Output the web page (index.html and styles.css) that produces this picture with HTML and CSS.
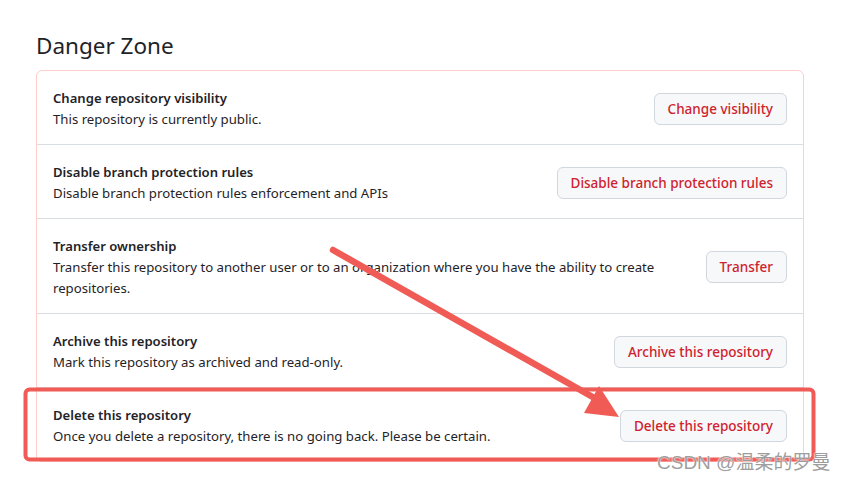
FILE: index.html
```html
<!DOCTYPE html>
<html lang="en">
<head>
<meta charset="utf-8">
<title>Danger Zone</title>
<link rel="stylesheet" href="styles.css">
</head>
<body>
<main class="page">
  <h2 class="heading">Danger Zone</h2>
  <section class="danger-box">
    <div class="row">
      <div class="info">
        <div class="title">Change repository visibility</div>
        <div class="desc">This repository is currently public.</div>
      </div>
      <button class="btn">Change visibility</button>
    </div>
    <div class="row">
      <div class="info">
        <div class="title">Disable branch protection rules</div>
        <div class="desc">Disable branch protection rules enforcement and APIs</div>
      </div>
      <button class="btn">Disable branch protection rules</button>
    </div>
    <div class="row">
      <div class="info narrow">
        <div class="title">Transfer ownership</div>
        <div class="desc">Transfer this repository to another user or to an organization where you have the ability to create repositories.</div>
      </div>
      <button class="btn">Transfer</button>
    </div>
    <div class="row">
      <div class="info">
        <div class="title">Archive this repository</div>
        <div class="desc">Mark this repository as archived and read-only.</div>
      </div>
      <button class="btn">Archive this repository</button>
    </div>
    <div class="row">
      <div class="info">
        <div class="title">Delete this repository</div>
        <div class="desc">Once you delete a repository, there is no going back. Please be certain.</div>
      </div>
      <button class="btn">Delete this repository</button>
    </div>
  </section>
  <svg class="annotation" width="844" height="482" viewBox="0 0 844 482">
    <rect x="25.5" y="389.5" width="788" height="70" rx="4" ry="4" fill="none" stroke="#f05b56" stroke-width="4"/>
    <line x1="333" y1="250" x2="598" y2="400" stroke="#f05b56" stroke-width="6.5" stroke-linecap="round"/>
    <polygon points="584,413 599,386 619,417" fill="#f05b56"/>
  </svg>
  <div class="watermark">CSDN @温柔的罗曼</div>
</main>
</body>
</html>
```
FILE: styles.css
```css
* { box-sizing: border-box; }
html, body { margin: 0; padding: 0; background: #ffffff; }
body {
  font-family: "Noto Sans", "Liberation Sans", sans-serif;
  color: #1f2328;
  width: 844px;
  height: 482px;
  overflow: hidden;
}
.page {
  position: relative;
  width: 844px;
  height: 482px;
  padding: 30px 40px 0 36px;
}
.heading {
  margin: 0 0 9px 0;
  font-size: 22.5px;
  font-weight: 400;
  line-height: 31px;
  color: #1f2328;
}
.danger-box {
  width: 768px;
  border: 1px solid #ffcecb;
  border-radius: 6px;
}
.row {
  display: flex;
  align-items: center;
  justify-content: space-between;
  padding: 17px 16px 15px;
  border-top: 1px solid #d8dee4;
}
.row:first-child { border-top: none; }
.info { flex: 1; min-width: 0; }
.info.narrow { max-width: 640px; }
.title {
  font-size: 13.1px;
  font-weight: 600;
  line-height: 21px;
}
.desc {
  font-size: 13.2px;
  line-height: 20px;
}
.info.narrow .desc { line-height: 20.5px; }
.btn {
  flex: none;
  height: 32px;
  padding: 0 13px;
  font-family: inherit;
  font-size: 13.5px;
  font-weight: 500;
  color: #cf222e;
  background: #f6f8fa;
  border: 1px solid #d0d7de;
  border-radius: 6px;
  margin-left: 16px;
}
.annotation {
  position: absolute;
  left: 0;
  top: 0;
  pointer-events: none;
}
.watermark {
  position: absolute;
  left: 657px;
  top: 451px;
  font-family: "Liberation Sans", "Noto Sans CJK SC", sans-serif;
  font-size: 19px;
  line-height: 24px;
  color: rgba(140, 140, 140, 0.85);
  text-shadow: 0 0 1px #fff, 0 0 2px #fff;
  white-space: nowrap;
}
```
